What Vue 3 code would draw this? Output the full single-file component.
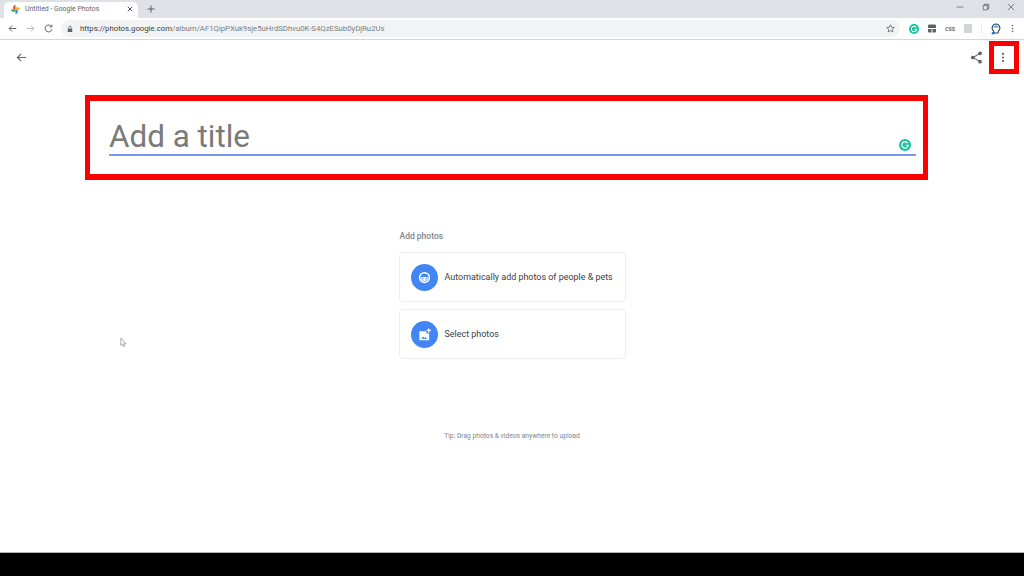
<template>
  <div class="screen">
    <div class="tabstrip">
      <div class="tab">
        <svg class="favicon" viewBox="0 0 12 12">
          <path d="M6 6V1a2.500 2.500 0 0 0-2.500 2.500V6z" fill="#ea4335" />
          <path d="M6 6h5a2.500 2.500 0 0 0-2.500-2.500H6z" fill="#fbbc04" />
          <path d="M6 6v5a2.500 2.500 0 0 0 2.500-2.500V6z" fill="#4285f4" />
          <path d="M6 6H1a2.500 2.500 0 0 0 2.500 2.500H6z" fill="#34a853" />
        </svg>
        <span class="tab-title">Untitled - Google Photos</span>
        <svg class="tab-close" viewBox="0 0 8 8"><path d="M1 1l6 6M7 1L1 7" /></svg>
      </div>
      <svg class="new-tab" viewBox="0 0 10 10"><path d="M5 .5v9M.5 5h9" /></svg>
      <div class="window-btns">
        <svg viewBox="0 0 10 10"><path d="M1 5h8" /></svg>
        <svg viewBox="0 0 10 10"><path d="M1.500 3h5.500v5.500H1.500zM3 3V1.500h5.500V7H7" /></svg>
        <svg viewBox="0 0 10 10"><path d="M1 1l8 8M9 1L1 9" /></svg>
      </div>
    </div>

    <div class="toolbar">
      <svg class="nav" viewBox="0 0 12 12"><path d="M11 6H1.500M5.500 2l-4 4 4 4" /></svg>
      <svg class="nav off" viewBox="0 0 12 12"><path d="M1 6h9.500M6.500 2l4 4-4 4" /></svg>
      <svg class="nav" viewBox="0 0 12 12"><path d="M10 3.500A4.600 4.600 0 1 0 10.600 7M10.500 1v3H7.500" /></svg>
      <div class="omnibox">
        <svg class="lock" viewBox="0 0 8 10"><path d="M1 4.500h6V9H1z" fill="#5f6368" /><path d="M2.300 4.500V3a1.700 1.700 0 0 1 3.400 0v1.500" fill="none" stroke="#5f6368" /></svg>
        <span class="url"><span class="url-host">https://photos.google.com</span>/album/AF1QipPXuk9sje5uHrdSDhvu0K-S4QzESub0yDjRu2Us</span>
        <svg class="star" viewBox="0 0 12 12"><path d="M6 1l1.500 3.300 3.500.4-2.600 2.400.7 3.500L6 8.800l-3.100 1.800.7-3.500L1 4.700l3.500-.4z" /></svg>
      </div>
      <div class="extensions">
        <svg class="ext-g" viewBox="0 0 12 12">
          <circle cx="6" cy="6" r="6" fill="#15c39a" />
          <path d="M8.700 4.200A3.200 3.200 0 1 0 9.200 6.300H6.800" fill="none" stroke="#fff" stroke-width="1.300" />
        </svg>
        <svg class="ext-box" viewBox="0 0 9 9">
          <path d="M1.500 0h6A1.500 1.500 0 0 1 9 1.500V4H0V1.500A1.500 1.500 0 0 1 1.500 0z" fill="#5f6368" />
          <path d="M0 5h4v4H1a1 1 0 0 1-1-1zM5 5h4v3a1 1 0 0 1-1 1H5z" fill="#5f6368" />
        </svg>
        <span class="ext-css">css</span>
        <span class="ext-pages"></span>
        <span class="ext-sep"></span>
        <svg class="ext-bulb" viewBox="0 0 12 12">
          <path d="M6 1a4 4 0 0 1 2.500 7L8 10H4.500L3.500 8A4 4 0 0 1 6 1z" fill="#fff" stroke="#37474f" stroke-width="1.100" />
          <path d="M3 4.500A3.200 3.200 0 0 1 9 4.500z" fill="#4a9fe0" />
          <circle cx="3" cy="10.300" r="1.300" fill="#1a73e8" />
        </svg>
        <svg class="kebab small" viewBox="0 0 4 14"><circle cx="2" cy="2.500" r="1.200" /><circle cx="2" cy="7" r="1.200" /><circle cx="2" cy="11.500" r="1.200" /></svg>
      </div>
    </div>

    <div class="page">
      <div class="page-top">
        <svg class="back" viewBox="0 0 12 12"><path d="M11 6H1.500M5.500 2l-4 4 4 4" /></svg>
        <svg class="share" viewBox="0 0 14 14">
          <path d="M10.800 2.500L3 7l7.800 4.500" fill="none" stroke="#5f6368" stroke-width="1.100" />
          <circle cx="10.800" cy="2.500" r="2" fill="#5f6368" />
          <circle cx="3" cy="7" r="2" fill="#5f6368" />
          <circle cx="10.800" cy="11.500" r="2" fill="#5f6368" />
        </svg>
        <div class="more-box">
          <svg class="kebab" viewBox="0 0 4 14"><circle cx="2" cy="2.500" r="1.400" /><circle cx="2" cy="7" r="1.400" /><circle cx="2" cy="11.500" r="1.400" /></svg>
        </div>
      </div>

      <div class="title-box">
        <div class="title-field">
          <span class="title-text">Add a title</span>
          <svg class="grammarly" viewBox="0 0 12 12">
            <circle cx="6" cy="6" r="6" fill="#15c39a" />
            <path d="M8.700 4.200A3.200 3.200 0 1 0 9.200 6.300H6.800" fill="none" stroke="#fff" stroke-width="1.300" />
          </svg>
        </div>
      </div>

      <div class="add-section">
        <div class="add-label">Add photos</div>
        <div v-for="item in options" :key="item.label" class="add-card">
          <span class="add-icon">
            <svg v-if="item.icon === 'face'" viewBox="0 0 16 16">
              <circle cx="8" cy="8" r="6" fill="#fff" />
              <circle cx="8" cy="8" r="4.400" fill="#4285f4" />
              <path d="M4 8.600C5 7.200 11 7.200 12 8.600 11.500 13 4.500 13 4 8.600z" fill="#fff" />
              <circle cx="6.200" cy="9.200" r=".8" fill="#4285f4" />
              <circle cx="9.800" cy="9.200" r=".8" fill="#4285f4" />
            </svg>
            <svg v-else viewBox="0 0 16 16">
              <path d="M2.500 4.500h7.500v2.500h3V14H2.500z" fill="#fff" />
              <path d="M4.500 12.500l2-2.500 1.500 1.700 1-1.200 2 2z" fill="#4285f4" />
              <path d="M12.500 1.500v4.500M10.200 3.700h4.600" stroke="#fff" stroke-width="1.300" />
            </svg>
          </span>
          <span class="add-text">{{ item.label }}</span>
        </div>
      </div>

      <div class="tip">Tip: Drag photos &amp; videos anywhere to upload</div>

      <svg class="cursor" viewBox="0 0 8 12"><path d="M1 1v8.500l2-1.800 1.200 2.800 1.200-.5-1.200-2.700h2.600z" /></svg>
    </div>

    <div class="black-bar"></div>
  </div>
</template>

<script setup>
const options = [
  { label: 'Automatically add photos of people & pets', icon: 'face' },
  { label: 'Select photos', icon: 'add' }
];
</script>

<style>
html, body {
  margin: 0;
  padding: 0;
  background: #fff;
}
</style>

<style scoped>
.screen {
  width: 1024px;
  height: 576px;
  display: flex;
  flex-direction: column;
  overflow: hidden;
  font-family: Roboto, "Liberation Sans", sans-serif;
}

/* browser chrome */
.tabstrip {
  height: 18px;
  background: #dee1e6;
  display: flex;
  align-items: flex-end;
  padding-left: 4px;
  flex-shrink: 0;
}
.tab {
  width: 134px;
  height: 16px;
  background: #fff;
  border-radius: 5px 5px 0 0;
  display: flex;
  align-items: center;
  padding: 0 5px 2px 6px;
  box-sizing: border-box;
}
.favicon {
  width: 11px;
  height: 11px;
  margin-right: 4px;
}
.tab-title {
  flex: 1;
  font-size: 6.900px;
  color: #5f6368;
  white-space: nowrap;
}
.tab-close {
  width: 6px;
  height: 6px;
  fill: none;
  stroke: #3c4043;
  stroke-width: 1.200;
}
.new-tab {
  width: 8px;
  height: 8px;
  margin: 0 0 5px 9px;
  fill: none;
  stroke: #5f6368;
  stroke-width: 1.300;
}
.window-btns {
  margin: 0 9px 4px auto;
  display: flex;
  align-self: center;
  gap: 17.500px;
}
.window-btns svg {
  width: 8px;
  height: 8px;
  fill: none;
  stroke: #5f6368;
  stroke-width: 1;
}
.toolbar {
  height: 21px;
  background: #fff;
  border-bottom: 1px solid #d4d6d9;
  display: flex;
  align-items: center;
  padding-left: 8px;
  flex-shrink: 0;
}
.nav {
  width: 9px;
  height: 9px;
  margin-right: 9px;
  fill: none;
  stroke: #5f6368;
  stroke-width: 1.300;
}
.nav.off {
  stroke: #b4b7bb;
}
.omnibox {
  width: 839px;
  height: 17px;
  margin-left: -1px;
  background: #f1f3f4;
  border-radius: 9px;
  display: flex;
  align-items: center;
  padding: 0 5px 0 6px;
  box-sizing: border-box;
}
.lock {
  width: 6px;
  height: 8px;
  margin-right: 7px;
}
.url {
  font-size: 7.750px;
  color: #7a7e83;
  white-space: nowrap;
}
.url-host {
  color: #3c4043;
}
.star {
  margin-left: auto;
  width: 9px;
  height: 9px;
  fill: none;
  stroke: #5f6368;
  stroke-width: 1.100;
}
.extensions {
  display: flex;
  align-items: center;
  margin-left: 9px;
}
.ext-g {
  width: 10px;
  height: 10px;
}
.ext-box {
  width: 8px;
  height: 9px;
  margin-left: 9px;
}
.ext-css {
  margin-left: 9px;
  width: 9px;
  font-size: 6.500px;
  font-weight: 500;
  color: #5f6368;
}
.ext-pages {
  width: 8px;
  height: 9px;
  margin-left: 10px;
  background: #d2d4d6;
}
.ext-sep {
  width: 1px;
  height: 11px;
  margin-left: 9px;
  background: #e8eaed;
}
.ext-bulb {
  width: 12px;
  height: 12px;
  margin-left: 8px;
}
.kebab {
  fill: #5f6368;
}
.kebab.small {
  width: 3px;
  height: 9px;
  margin-left: 9px;
}

/* page */
.page {
  flex: 1;
  position: relative;
  display: flex;
  flex-direction: column;
  align-items: center;
  background: #fff;
  min-height: 0;
}
.page-top {
  width: 100%;
  height: 36px;
  display: flex;
  align-items: flex-start;
  box-sizing: border-box;
  padding: 1px 5px 0 16px;
}
.back {
  width: 11px;
  height: 11px;
  margin-top: 11px;
  fill: none;
  stroke: #5f6368;
  stroke-width: 1.200;
}
.share {
  width: 13px;
  height: 13px;
  margin: 10px 6px 0 auto;
}
.more-box {
  width: 30px;
  height: 33px;
  border: 5px solid #f00;
  box-sizing: border-box;
  display: flex;
  align-items: center;
  justify-content: center;
}
.more-box .kebab {
  width: 4px;
  height: 11px;
  margin-right: 2px;
}
.title-box {
  width: 843px;
  height: 85px;
  margin: 19px 11px 0 0;
  border-style: solid;
  border-color: #f00;
  border-width: 6px 5px;
  box-sizing: border-box;
  padding: 16px 7px 0 19px;
}
.title-field {
  height: 37px;
  border-bottom: 2px solid #7a9ae8;
  display: flex;
  align-items: flex-end;
  justify-content: space-between;
}
.title-text {
  font-size: 31.400px;
  line-height: 34px;
  color: #7a7a7a;
}
.grammarly {
  width: 12px;
  height: 12px;
  margin: 0 5px 3px 0;
}
.add-section {
  width: 227px;
  margin-top: 50px;
  display: flex;
  flex-direction: column;
  gap: 7px;
}
.add-label {
  font-size: 8.500px;
  font-weight: 500;
  line-height: 12px;
  color: #80868b;
  margin-bottom: 3px;
  padding-left: 1px;
}
.add-card {
  height: 50px;
  border: 1px solid #eceef0;
  border-radius: 4px;
  box-sizing: border-box;
  display: flex;
  align-items: center;
  padding-left: 11px;
}
.add-icon {
  width: 27px;
  height: 27px;
  border-radius: 50%;
  background: #4285f4;
  display: flex;
  align-items: center;
  justify-content: center;
  margin-right: 7px;
}
.add-icon svg {
  width: 15px;
  height: 15px;
}
.add-text {
  font-size: 8.950px;
  color: #3c4043;
  white-space: nowrap;
}
.tip {
  margin-top: 72px;
  font-size: 6.700px;
  line-height: 10px;
  color: #80868b;
}
.cursor {
  position: absolute;
  left: 120px;
  top: 297px;
  width: 7px;
  height: 11px;
  fill: #fff;
  stroke: #888;
  stroke-width: .8;
}
.black-bar {
  height: 24px;
  background: #000;
  border-top: 1px solid #b5b5b5;
  box-shadow: 0 -2px 4px rgba(0, 0, 0, .18);
  box-sizing: border-box;
  flex-shrink: 0;
}
</style>
